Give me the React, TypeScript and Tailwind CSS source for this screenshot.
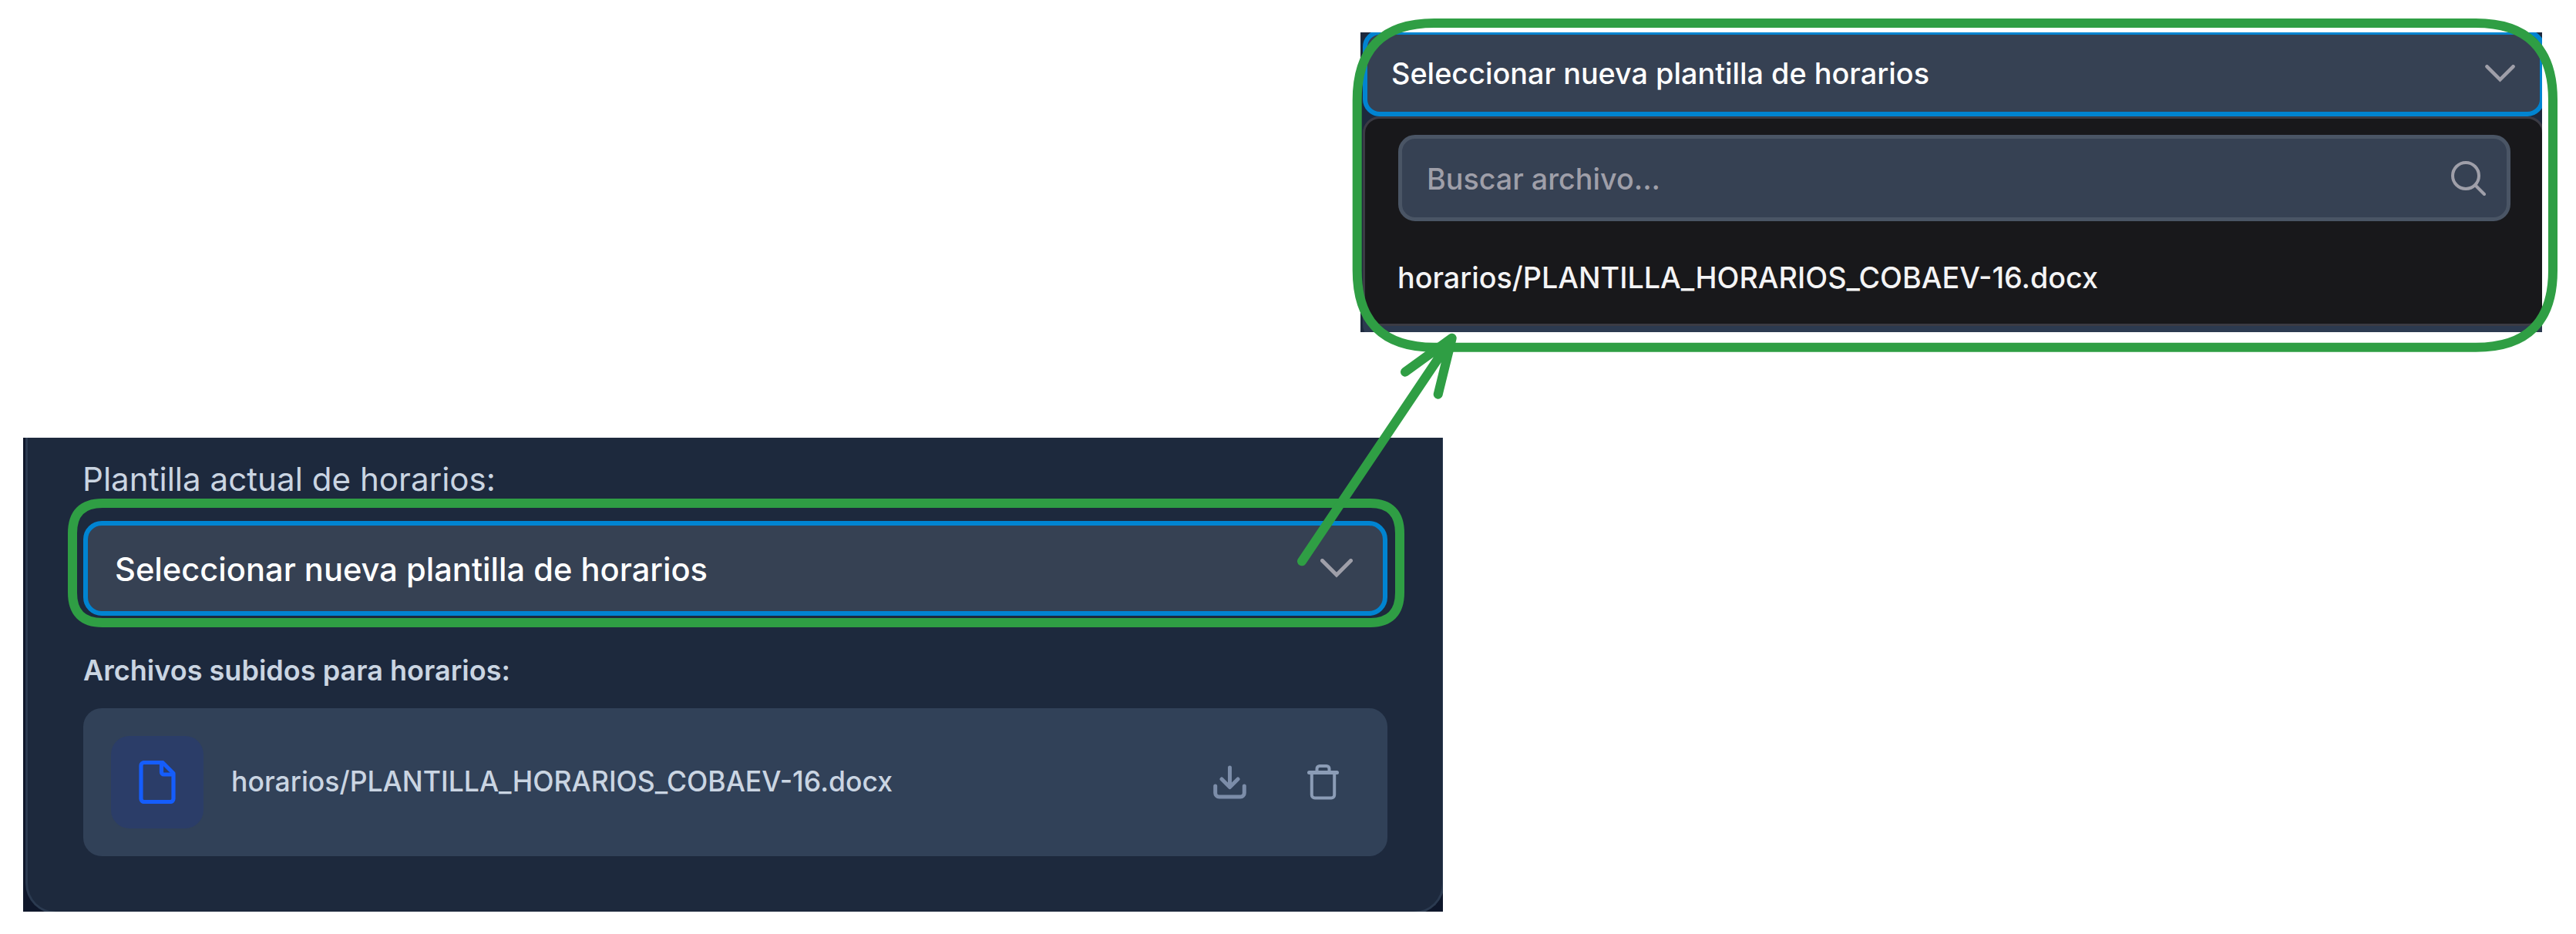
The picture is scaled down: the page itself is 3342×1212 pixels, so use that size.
import React from "react";

const FONT = "font-['Inter',sans-serif]";

type LabelProps = {
  text: string;
  width: number;
  height: number;
  baseline: number;
  size: number;
  className: string;
};

/* Single-line label with a fixed text width and baseline. */
function Label({ text, width, height, baseline, size, className }: LabelProps) {
  return (
    <svg width={width} height={height} className="block shrink-0 overflow-visible" aria-label={text}>
      <text x={0} y={baseline} fontSize={size} textLength={width} lengthAdjust="spacingAndGlyphs" className={className}>
        {text}
      </text>
    </svg>
  );
}

function Chevron({ w, h }: { w: number; h: number }) {
  return (
    <svg width={w} height={h} viewBox="0 0 42 25" fill="none" stroke="#9f9fa9" strokeWidth="5" className="shrink-0">
      <path d="M2.5 2.5 21 21 39.5 2.5" strokeLinecap="round" />
    </svg>
  );
}

function SearchIcon() {
  return (
    <svg width="45" height="45" viewBox="0 0 45 45" fill="none" stroke="#9f9fa9" strokeWidth="4" className="shrink-0">
      <circle cx="19" cy="19" r="17" />
      <path d="M31.5 31.5 43 43" strokeLinecap="round" />
    </svg>
  );
}

function DropdownPanel() {
  return (
    <section className="ml-[1765px] h-[389px] w-[1533px] overflow-hidden bg-[#1d293d]">
      <div className="-mt-[3px] ml-[3px] flex h-[112px] w-[1533px] items-center justify-between rounded-[22px] border-[6px] border-[#0084d1] bg-[#364153] pr-[32px] pl-[31px]">
        <Label text="Seleccionar nueva plantilla de horarios" width={698} height={40} baseline={34} size={38.4} className="fill-white font-[550]" />
        <Chevron w={39} h={23} />
      </div>
      <div className="ml-[3px] w-[1533px] rounded-[22px] bg-[#2c3a50]">
        <div className="h-[272px] w-[1533px] rounded-[22px] border-[3px] border-[#3b3b44] bg-[#18181b] px-[43px] pt-[21px]">
          <div className="flex h-[112px] w-[1443px] items-center justify-between rounded-[22px] border-[5px] border-[#4a5565] bg-[#364153] pr-[27px] pl-[32px]">
            <Label text="Buscar archivo..." width={303} height={40} baseline={35} size={38.4} className="fill-[#9f9fa9] font-[450]" />
            <SearchIcon />
          </div>
          <div className="-ml-[1px] mt-[52px]">
            <Label text="horarios/PLANTILLA_HORARIOS_COBAEV-16.docx" width={909} height={40} baseline={35} size={38.4} className="fill-[#f4f4f5] font-[550]" />
          </div>
        </div>
        <div className="h-[20px]" />
      </div>
    </section>
  );
}

function FileRow() {
  return (
    <div className="mt-[27px] flex h-[192px] w-[1692px] items-center rounded-[24px] bg-[#314158] pr-[63px] pl-[36px]">
      <div className="flex size-[120px] shrink-0 items-center justify-center rounded-[24px] bg-[#2b3d68]">
        <svg width="48" height="56" viewBox="0 0 48 56" fill="none" stroke="#155dfc" strokeWidth="5.2" strokeLinejoin="round">
          <path d="M7 2.500H31L45 16.500V49.500a4 4 0 0 1-4 4H7a4 4 0 0 1-4-4V6.500a4 4 0 0 1 4-4Z" />
          <path d="M29.500 3V15a3 3 0 0 0 3 3H45" />
        </svg>
      </div>
      <div className="ml-[36px]">
        <Label text="horarios/PLANTILLA_HORARIOS_COBAEV-16.docx" width={858} height={40} baseline={31.500} size={36.400} className="fill-[#cad5e2] font-[520]" />
      </div>
      <div className="ml-auto flex items-center gap-[79px]">
        <svg width="43" height="44" viewBox="0 0 43 44" fill="none" stroke="#7c8da9" strokeWidth="5" strokeLinecap="round" strokeLinejoin="round">
          <path d="M2.700 27V36a5 5 0 0 0 5 5H35.300a5 5 0 0 0 5-5V27" />
          <path d="M21.500 3V28M11 18 21.500 28.500 32 18" />
        </svg>
        <svg width="41" height="48" viewBox="0 0 41 48" fill="none" stroke="#8b9cb6" strokeWidth="4" strokeLinecap="round" strokeLinejoin="round">
          <path d="M2.500 11.500H38.500" strokeWidth="5" />
          <path d="M5.800 12V40.500a4 4 0 0 0 4 4H31.200a4 4 0 0 0 4-4V12M12.500 11V6.500a3.500 3.500 0 0 1 3.500-3.500H25a3.500 3.500 0 0 1 3.500 3.500V11" />
        </svg>
      </div>
    </div>
  );
}

function TemplatePanel() {
  return (
    <section className="mt-[137px] ml-[30px] h-[615px] w-[1842px] overflow-hidden bg-[#0f172b]">
      <div className="ml-[3px] h-[618px] w-[1841px] rounded-b-[40px] border-[3px] border-t-0 border-[#2b3a50] bg-[#1d293d] pt-[35px] pl-[72px]">
        <div className="-ml-[1px]">
          <Label text="Plantilla actual de horarios:" width={536} height={40} baseline={34} size={42} className="fill-[#cad5e2] font-[430]" />
        </div>
        <div className="mt-[33px] flex h-[123px] w-[1692px] items-center justify-between rounded-[24px] border-[6px] border-[#0084d1] bg-[#364153] pr-[39px] pl-[35px]">
          <Label text="Seleccionar nueva plantilla de horarios" width={769} height={40} baseline={36} size={42} className="fill-white font-[530]" />
          <Chevron w={42} h={25} />
        </div>
        <div className="mt-[53px]">
          <Label text="Archivos subidos para horarios:" width={554} height={40} baseline={30.500} size={36.400} className="fill-[#cad5e2] font-[620]" />
        </div>
        <FileRow />
      </div>
    </section>
  );
}

/* Hand-placed highlight frames and arrow linking the select to its open menu. */
function Annotations() {
  return (
    <svg
      width="3342"
      height="1212"
      viewBox="0 0 3342 1212"
      fill="none"
      stroke="#2f9e44"
      strokeWidth="12"
      strokeLinecap="round"
      strokeLinejoin="round"
      className="pointer-events-none absolute inset-0"
    >
      <path d="M133 653H1777Q1816 653 1816 692V769Q1816 808 1777 808H133Q94 808 94 769V692Q94 653 133 653Z" />
      <path d="M1860.700 30H3212Q3312 30 3312 130V350.700Q3312 450.700 3212 450.700H1860.700Q1760.700 450.700 1760.700 350.700V130Q1760.700 30 1860.700 30Z" />
      <path d="M1689 728.300 1883.700 438.700M1823 482.700 1883.700 438.700 1865.700 511.700" />
    </svg>
  );
}

export default function App() {
  return (
    <main className={`relative h-[1212px] w-[3342px] overflow-hidden bg-white pt-[42px] ${FONT}`}>
      <DropdownPanel />
      <TemplatePanel />
      <Annotations />
    </main>
  );
}
